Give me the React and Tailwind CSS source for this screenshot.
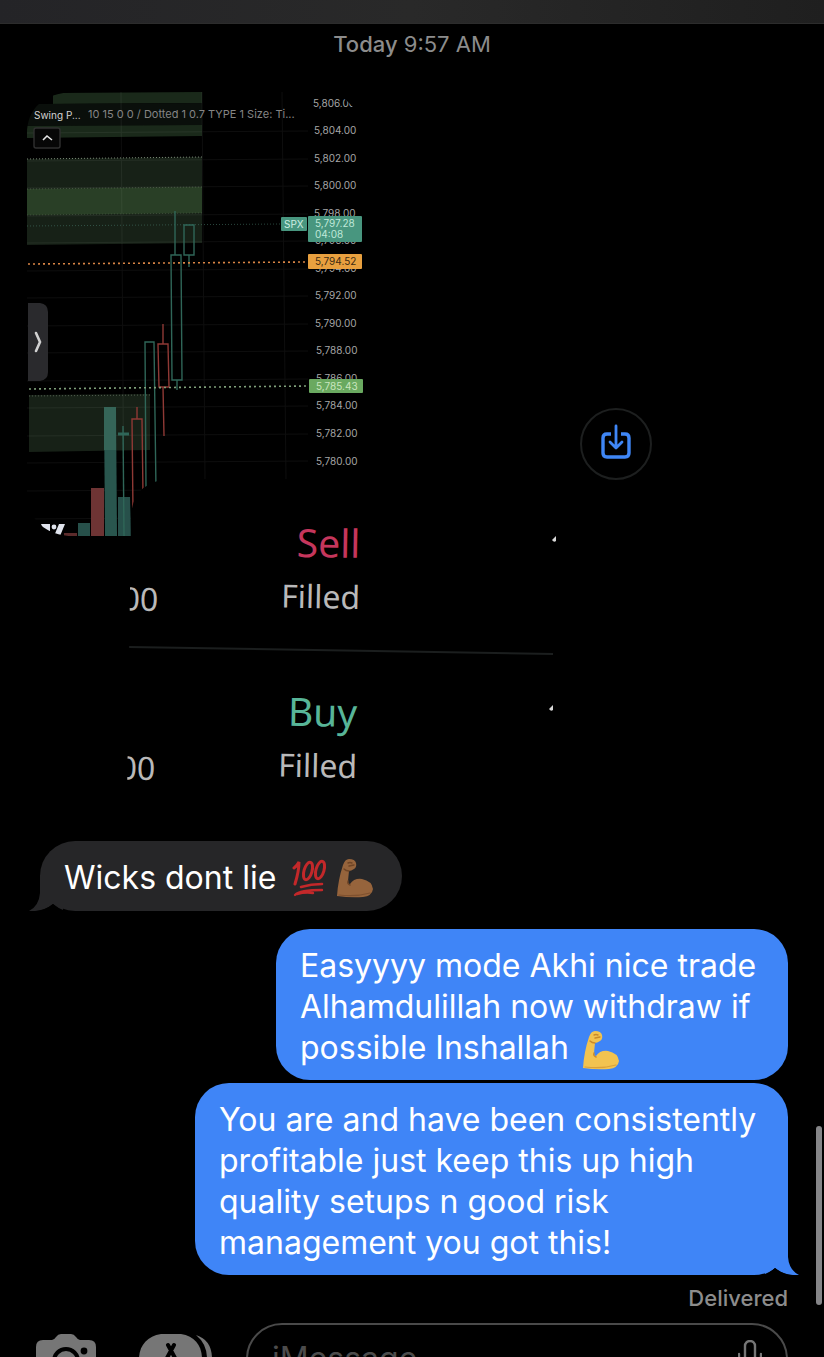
import { useState } from 'react';

const priceTicks = [
  { label: '5,806.00', x: 313, y: 107 },
  { label: '5,804.00', x: 314, y: 134 },
  { label: '5,802.00', x: 314, y: 162 },
  { label: '5,800.00', x: 314, y: 189 },
  { label: '5,798.00', x: 314, y: 217 },
  { label: '5,796.00', x: 315, y: 244 },
  { label: '5,794.00', x: 315, y: 272 },
  { label: '5,792.00', x: 315, y: 299 },
  { label: '5,790.00', x: 315, y: 327 },
  { label: '5,788.00', x: 316, y: 354 },
  { label: '5,786.00', x: 316, y: 382 },
  { label: '5,784.00', x: 316, y: 409 },
  { label: '5,782.00', x: 316, y: 437 },
  { label: '5,780.00', x: 316, y: 465 },
];

const gridRows = [133, 161, 188, 216, 243, 271, 298, 326, 353, 381, 408, 436, 463, 491, 519];

function ChartPhoto() {
  return (
    <svg
      viewBox="27 92 336 444"
      className="col-start-1 row-start-1 h-[444px] w-[336px] font-['Inter',sans-serif]"
      role="img"
      aria-label="SPX chart"
    >
      <defs>
        <clipPath id="chart-corner">
          <path d="M68 92 H325 Q350 94 363 124 V536 H72 C50 536 27 522 27 494 V134 C27 108 44 93 74 92 Z" />
        </clipPath>
      </defs>
      <g clipPath="url(#chart-corner)">
        {/* supply / demand zones */}
        <path d="M53 93 L202 92 V103 L53 104 Z" fill="#1b2a1b" />
        <path d="M27 104 L202 103 V125 L27 126 Z" fill="#0b100c" />
        <path d="M27 126 L202 125 V136 L27 138 Z" fill="#1b2a1b" />
        <path d="M27 159 L202 157 V243 L27 245 Z" fill="#182218" />
        <path d="M27 189 L202 187 V213 L27 215 Z" fill="#2a4026" />
        <path d="M29 395 L150 394 V450 L29 452 Z" fill="#182218" />
        <g stroke="#7c8a78" strokeDasharray="1 2">
          <path d="M27 159 L202 157" />
          <path d="M27 189 L202 187" opacity=".4" />
          <path d="M27 215 L202 213" opacity=".3" />
          <path d="M29 396 L150 395" opacity=".6" />
        </g>
        <path d="M27 226 L281 224" stroke="#3f6a5c" strokeDasharray="1 2" opacity=".7" />

        <g stroke="#fff" opacity=".05">
          {gridRows.map((y) => (
            <path key={y} d={`M27 ${y} L308 ${y - 2}`} />
          ))}
          <path d="M121 92 L124 536" />
          <path d="M202 92 L205 480" />
          <path d="M282 92 L286 480" />
        </g>

        {/* volume */}
        <path d="M64 533 H77 V536 H64 Z" fill="#5c2b2b" />
        <path d="M78 523 H90 V536 H78 Z" fill="#27504a" />
        <path d="M91 488 H104 V536 H91 Z" fill="#6e3434" />
        <path d="M104 407 H116 L117 536 H105 Z" fill="#29564e" />
        <path d="M104 407 H116 V450 H104 Z" fill="#356558" />
        <path d="M118 497 H130 L131 536 H118 Z" fill="#27504a" />

        {/* candles */}
        <g fill="none" stroke="#2f6658" strokeWidth="1.4">
          <path d="M123 426 L124 536" />
          <path d="M118 434 H129" strokeWidth="3" />
          <path d="M146 490 L145 342 H154 L156 490" />
          <path d="M175 211 V255 M171 255 H181 L182 380 H172 Z M177 380 V390" />
          <path d="M184 225 H194 V255 H184 Z M189 255 V267" />
        </g>
        <g fill="none" stroke="#8f3935" strokeWidth="1.4">
          <path d="M133 512 L132 419 H142 L143 494 M137 407 V419" />
          <path d="M158 344 H168 L169 387 H159 Z M163 324 V344 M163 387 L164 436" />
        </g>

        {/* alert levels */}
        <path d="M28 264 L306 262" stroke="#d98545" strokeWidth="1.6" strokeDasharray="2 3" />
        <path d="M29 389 L308 386" stroke="#7f9f7a" strokeWidth="1.6" strokeDasharray="2 3" />

        <g fill="#a6a6a6" fontSize="10">
          {priceTicks.map((tick) => (
            <text key={tick.label} x={tick.x} y={tick.y}>{tick.label}</text>
          ))}
        </g>

        <rect x="281" y="217" width="26" height="14" rx="1" fill="#48967f" />
        <text x="284" y="228" fontSize="10" fill="#cfeee2">SPX</text>
        <rect x="308" y="216" width="54" height="26" rx="1" fill="#48967f" />
        <g fontSize="10" fill="#bfe8d8">
          <text x="315" y="227">5,797.28</text>
          <text x="315" y="238">04:08</text>
        </g>
        <rect x="308" y="254" width="54" height="15" rx="1" fill="#e8a03f" />
        <text x="315" y="265" fontSize="10" fill="#3d2a12">5,794.52</text>
        <rect x="309" y="379" width="54" height="14" rx="1" fill="#6aa960" />
        <text x="316" y="390" fontSize="10" fill="#c9e6bf">5,785.43</text>

        {/* indicator legend */}
        <text x="34" y="119" fontSize="10" fill="#d4d4d4">Swing P...</text>
        <text x="88" y="118" fontSize="11" fill="#858585">10 15 0 0 / Dotted 1 0.7 TYPE 1 Size: Ti...</text>
        <rect x="34" y="128" width="26" height="20" rx="2" fill="#070707" stroke="#303030" strokeWidth="1.4" />
        <path d="M43 140 L47 136 L52 140" fill="none" stroke="#e5e5e5" strokeWidth="1.6" />

        {/* drawer handle */}
        <path d="M28 303 H40 Q48 304 48 312 V372 Q48 380 40 381 H28 Z" fill="#2a2a2d" />
        <path d="M36 333 L40 342 L36 351" fill="none" stroke="#d0d0d0" strokeWidth="2.6" strokeLinecap="round" />

        {/* chart vendor mark */}
        <g fill="#dfe3ec">
          <path d="M41 524 H50 V536 H46 Z" />
          <circle cx="54" cy="527" r="2.4" />
          <path d="M59 524 H65 L60 536 H54 Z" />
        </g>
      </g>
    </svg>
  );
}

function OrdersPhoto() {
  return (
    <svg
      viewBox="127 479 429 317"
      className="z-10 col-start-1 row-start-1 h-[317px] w-[429px] self-end justify-self-end font-['Noto_Sans',sans-serif]"
      role="img"
      aria-label="Filled orders"
    >
      <defs>
        <clipPath id="orders-edge">
          <path d="M172 479 H557 L552 796 H127 L131 519 Q131 481 172 479 Z" />
        </clipPath>
      </defs>
      <g clipPath="url(#orders-edge)">
        <path d="M127 479 H556 V796 H127 Z" fill="#000" />
        <g textAnchor="end">
          <text x="360" y="558" fontSize="39" fill="#c5365c" transform="rotate(1 360 558)">Sell</text>
          <text x="360" y="609" fontSize="32" fill="#b9b9b9" transform="rotate(1 360 609)">Filled</text>
          <text x="158" y="611" fontSize="32" fill="#b9b9b9" transform="rotate(1 158 611)">00</text>
          <text x="357" y="727" fontSize="39" fill="#58b598" transform="rotate(1 357 727)">Buy</text>
          <text x="357" y="778" fontSize="32" fill="#b9b9b9" transform="rotate(1 357 778)">Filled</text>
          <text x="155" y="780" fontSize="32" fill="#b9b9b9" transform="rotate(1 155 780)">00</text>
        </g>
        <path d="M129 647 L553 654" stroke="#1b1e1e" strokeWidth="2" />
        <path d="M552 540 L556 536 V541 Q554 543 552 540 Z M549 709 L553 705 V710 Q551 712 549 709 Z" fill="#d8d8d8" />
      </g>
    </svg>
  );
}

function HundredEmoji() {
  return (
    <svg viewBox="0 0 36 38" className="inline-block h-[38px] w-9 align-middle" role="img" aria-label="100">
      <g fill="none" stroke="#c3282a" strokeLinecap="round">
        <path d="M2 9 Q5 7 7 3 Q7 12 3 25" strokeWidth="3" />
        <ellipse cx="16" cy="12" rx="4" ry="9" transform="rotate(16 16 12)" strokeWidth="3" />
        <ellipse cx="28" cy="11" rx="4" ry="9" transform="rotate(16 28 11)" strokeWidth="3" />
        <path d="M9 28 Q19 25 30 25" strokeWidth="2.6" />
        <path d="M3 36 Q8 31 30 31 M5 35 Q13 33 21 34" strokeWidth="2.4" />
      </g>
    </svg>
  );
}

function BicepsEmoji({ fill, shade }) {
  return (
    <svg viewBox="0 0 38 40" className="-my-1 inline-block h-10 w-[38px] align-middle" role="img" aria-label="Flexed biceps">
      <path
        d="M7 7 Q9 1 13 1 Q19 1 20 5 Q21 9 18 11 Q15 13 13 13 L12 23 Q12 26 14 26 Q18 20 26 21 Q36 23 37 31 Q36 38 27 39 Q15 40 1 38 Q2 22 7 7 Z"
        fill={fill}
      />
      <path d="M12 5 Q14 4 16 5 M13 8 L18 7 M8 11 Q10 13 13 13 M12 23 Q11 26 14 27" fill="none" stroke={shade} strokeWidth="1.4" strokeLinecap="round" />
      <path d="M3 37 Q20 39 34 35" fill="none" stroke={shade} strokeWidth="1.2" strokeLinecap="round" opacity=".6" />
    </svg>
  );
}

function SentBubble({ children, tail, className }) {
  return (
    <div className={`relative rounded-[34px] bg-[#3f85f7] px-6 pt-4 pb-3 ${className}`}>
      <p>{children}</p>
      {tail && (
        <svg viewBox="0 0 34 36" className="absolute -right-[11px] bottom-0 h-9 w-[34px]" aria-hidden="true">
          <path d="M0 0 H23 V18 Q24 31 34 36 Q20 37 10 29 Q5 33 0 35 Z" fill="#3f85f7" />
          <path d="M0 36 Q5 34 10 29 Q17 35 26 36 Z" fill="#000" />
        </svg>
      )}
    </div>
  );
}

function Composer() {
  const [message, setMessage] = useState('');

  return (
    <form className="flex shrink-0 items-center pr-9 pl-9" onSubmit={(e) => e.preventDefault()}>
      <button type="button" aria-label="Camera" className="shrink-0">
        <svg viewBox="0 0 60 50" className="h-[50px] w-[60px]">
          <path d="M7 6 H16 Q18 6 20 3 Q22 0 25 0 H35 Q38 0 40 3 Q42 6 44 6 H53 Q60 6 60 13 V43 Q60 50 53 50 H7 Q0 50 0 43 V13 Q0 6 7 6 Z" fill="#767676" />
          <circle cx="30" cy="27" r="12" fill="none" stroke="#000" strokeWidth="4" />
          <circle cx="48" cy="17" r="3.4" fill="#000" />
        </svg>
      </button>
      <button type="button" aria-label="Apps" className="ml-[43px] shrink-0">
        <svg viewBox="0 0 73 50" className="h-[50px] w-[73px]">
          <path d="M22 0 H42 C56 2 63 12 63 25 C63 38 56 48 42 50 H22 C8 48 0 38 0 25 C0 12 8 2 22 0 Z" fill="#767676" />
          <path d="M57 1 Q73 6 73 25 Q73 44 57 49 Q68 40 68 25 Q68 10 57 1 Z" fill="#767676" />
          <path d="M29 11 L42 35 M35 11 L22 35 M19 30 H34 M40 30 H45" stroke="#000" strokeWidth="4" strokeLinecap="round" />
        </svg>
      </button>
      <div className="ml-[34px] flex h-[72px] min-w-0 flex-1 items-center rounded-full border-2 border-[#4a4a4a] pr-6 pl-6">
        <input
          type="text"
          aria-label="Message"
          placeholder="iMessage"
          value={message}
          onChange={(e) => setMessage(e.target.value)}
          className="min-w-0 flex-1 bg-transparent text-[32px] text-white outline-none placeholder:text-[#4c4c4c]"
        />
        <button type="button" aria-label="Dictate">
          <svg viewBox="0 0 24 38" className="h-[38px] w-6" fill="none" stroke="#767676" strokeWidth="2.4" strokeLinecap="round">
            <rect x="7" y="1" width="10" height="22" rx="5" />
            <path d="M1 14 V19 Q2 29 12 29 Q22 29 23 19 V14 M12 29 V36 M6 36 H18" />
          </svg>
        </button>
      </div>
    </form>
  );
}

export default function App() {
  return (
    <div className="relative flex h-screen flex-col overflow-hidden bg-black font-['Inter',sans-serif] text-white">
      <header className="h-6 shrink-0 border-b border-[#2c2c2c] bg-linear-to-r from-[#242427] via-[#292929] to-[#1f1f1f]" />

      <main className="flex flex-col text-[32px] leading-[41px]">
        <time className="mt-[6px] text-center text-[22px] leading-7 text-[#8c8c8c]">
          <span className="font-medium">Today</span> 9:57 AM
        </time>

        <div className="mt-[34px] ml-[27px] flex items-center gap-6">
          <div className="grid h-[704px] w-[529px]">
            <ChartPhoto />
            <OrdersPhoto />
          </div>
          <button
            type="button"
            aria-label="Save photos"
            className="flex size-[72px] shrink-0 items-center justify-center rounded-full border-2 border-[#1d1f1f]"
          >
            <svg viewBox="0 0 30 36" className="mb-1 h-9 w-[30px]" fill="none" stroke="#3f86f5" strokeLinecap="round" strokeLinejoin="round">
              <path d="M10 10 H6 Q2 10 2 14 V29 Q2 33 6 33 H24 Q28 33 28 29 V14 Q28 10 24 10 H20" strokeWidth="3.4" strokeLinecap="butt" />
              <path d="M15 2 V23 M9 18 L15 24 L21 18" strokeWidth="2.8" />
            </svg>
          </button>
        </div>

        <div className="relative mt-[45px] ml-10 flex items-center self-start rounded-[35px] bg-[#262628] pt-4 pr-7 pb-[13px] pl-6">
          <svg viewBox="0 0 34 36" className="absolute bottom-0 -left-[11px] h-9 w-[34px]" aria-hidden="true">
            <path d="M34 0 H11 V18 Q10 31 0 36 Q14 37 24 29 Q29 33 34 35 Z" fill="#262628" />
            <path d="M34 36 Q29 34 24 29 Q17 35 8 36 Z" fill="#000" />
          </svg>
          <p className="mr-4">Wicks dont lie</p>
          <HundredEmoji />
          <span className="ml-2 flex">
            <BicepsEmoji fill="#96643c" shade="#6f4526" />
          </span>
        </div>

        <div className="mt-[18px] flex flex-col items-end gap-[3px] pr-9 pl-9">
          <SentBubble className="max-w-[512px]">
            Easyyyy mode Akhi nice trade Alhamdulillah now withdraw if possible Inshallah{' '}
            <span className="ml-1">
              <BicepsEmoji fill="#f2c350" shade="#c98a2b" />
            </span>
          </SentBubble>
          <SentBubble className="max-w-[593px]" tail>
            You are and have been consistently profitable just keep this up high quality setups n good risk management you got this!
          </SentBubble>
          <p className="mt-[6px] text-[22px] leading-7 font-medium text-[#8c8c8c]">Delivered</p>
        </div>
      </main>

      <div className="mt-[11px]">
        <Composer />
      </div>

      <div className="absolute right-[2px] bottom-[52px] h-[179px] w-[6px] rounded-full bg-[#858588]" />
    </div>
  );
}
